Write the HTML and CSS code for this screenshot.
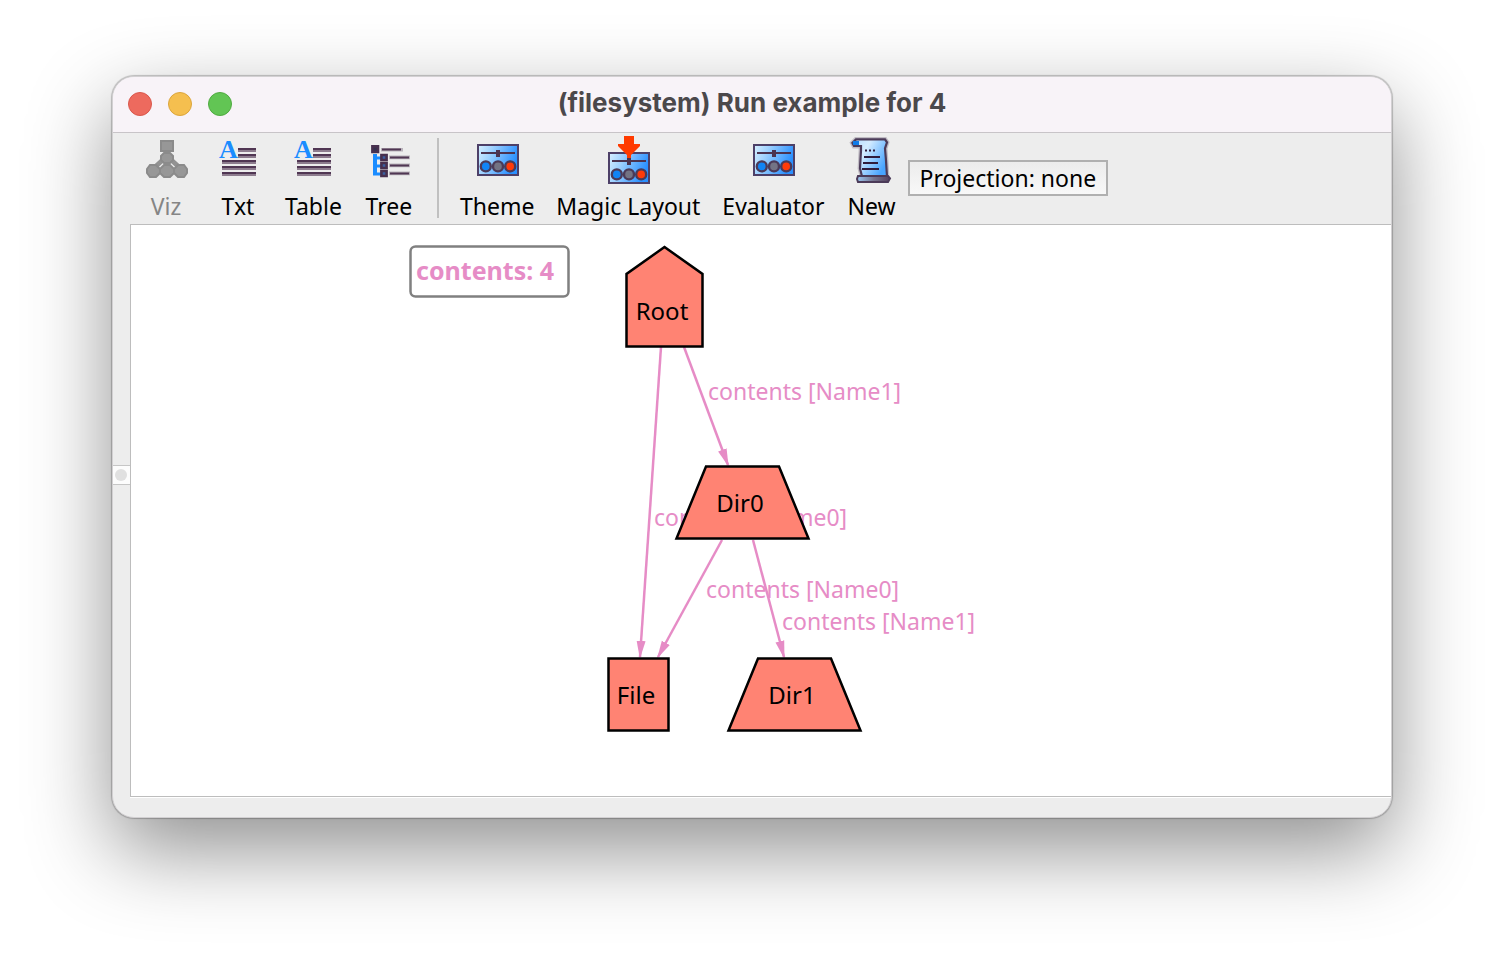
FILE: index.html
```html
<!DOCTYPE html>
<html lang="en">
<head>
<meta charset="utf-8">
<title>(filesystem) Run example for 4</title>
<link rel="stylesheet" href="styles.css">
</head>
<body>
<svg class="defs" width="0" height="0" aria-hidden="true">
  <defs>
    <linearGradient id="panelFill" x1="0" y1="0" x2="1" y2="0.3">
      <stop offset="0" stop-color="#d8f0ff"/>
      <stop offset="0.35" stop-color="#a0d2ff"/>
      <stop offset="1" stop-color="#2a90ff"/>
    </linearGradient>
    <linearGradient id="paperFill" x1="0" y1="0" x2="1" y2="0.6">
      <stop offset="0" stop-color="#b4dcff"/>
      <stop offset="0.4" stop-color="#d4ecff"/>
      <stop offset="1" stop-color="#48a4ff"/>
    </linearGradient>
    <linearGradient id="rollFill" x1="0" y1="0" x2="1" y2="0">
      <stop offset="0" stop-color="#9ac8f4"/>
      <stop offset="0.5" stop-color="#76748e"/>
      <stop offset="1" stop-color="#54405c"/>
    </linearGradient>
    <g id="panel">
      <rect x="2.5" y="4.5" width="20" height="15" fill="url(#panelFill)" stroke="#4d4068"/>
      <rect x="4" y="8" width="17" height="1" fill="#4b3350"/>
      <rect x="11.5" y="7" width="2" height="3.5" fill="#4b3350"/>
      <g stroke="#4b3a58" stroke-width="1.2">
        <circle cx="6.4" cy="15.2" r="2.5" fill="#1184f5"/>
        <circle cx="12.5" cy="15.2" r="2.5" fill="#737384"/>
        <circle cx="18.6" cy="15.2" r="2.5" fill="#ff3b0a"/>
      </g>
    </g>
    <g id="textLines">
      <path d="M12 6h9v2h-9zM12 9h9v2h-9zM4 12h17v2H4zM4 15h17v2H4zM4 18h17v2H4z" fill="#8d7c8e"/>
      <path d="M12 6h9v1h-9zM12 9h9v1h-9zM4 12h17v1H4zM4 15h17v1H4zM4 18h17v1H4z" fill="#503653"/>
      <text x="2.5" y="11" class="icon-letter">A</text>
    </g>
    <marker id="arrow" viewBox="0 0 20 10" refX="18" refY="5" markerWidth="18" markerHeight="10" markerUnits="userSpaceOnUse" orient="auto">
      <path d="M0 0L20 5L0 10z" fill="#e68cc6"/>
    </marker>
  </defs>
</svg>

<main class="window">
  <header class="titlebar">
    <div class="lights">
      <button class="light light-close" aria-label="Close"></button>
      <button class="light light-minimize" aria-label="Minimize"></button>
      <button class="light light-zoom" aria-label="Zoom"></button>
    </div>
    <h1 class="title">(filesystem) Run example for 4</h1>
  </header>

  <div class="body">
    <div class="gutter"><button class="grip" aria-label="Expand side panel"><span class="grip-dot"></span></button></div>
    <div class="content">
      <nav class="toolbar" aria-label="Views and tools">
        <button class="tool" disabled>
          <svg class="icon" viewBox="0 0 24 24" aria-hidden="true">
            <path d="M12.5 6v12M12.5 10L6 16M12.5 10L19 16" stroke="#929292" stroke-width="2.4" fill="none"/>
            <g fill="#979797" stroke="#8b8b8b">
              <path d="M9.5 2.5h6v5h-6z"/>
              <path d="M11 8.5h3l1.500 1.500v2l-1.500 1.500h-3l-1.500-1.500v-2z"/>
              <path d="M4 14.5h3l2 2v2l-2 2H4l-1.500-2v-2z"/>
              <path d="M11 14.5h3l2 2v2l-2 2h-3l-2-2v-2z"/>
              <path d="M18 14.5h3l1.500 2v2l-1.500 2h-3l-2-2v-2z"/>
            </g>
          </svg>
          <span>Viz</span>
        </button>
        <button class="tool">
          <svg class="icon" viewBox="0 0 24 24" aria-hidden="true"><use href="#textLines"/></svg>
          <span>Txt</span>
        </button>
        <button class="tool">
          <svg class="icon" viewBox="0 0 24 24" aria-hidden="true"><use href="#textLines"/></svg>
          <span>Table</span>
        </button>
        <button class="tool">
          <svg class="icon" viewBox="0 0 24 24" aria-hidden="true">
            <path d="M8 6h11v1.800H8zM12 9.800h10.500v1.800H12zM12 13.800h10.500v1.800H12zM12 17.800h10.500v1.800H12z" fill="#b9b3bb"/>
            <path d="M8.500 6.200h9.500v1H8.500zM12.500 10.200H22v1h-9.500zM12.500 14.200H22v1h-9.500zM12.500 18.200H22v1h-9.500z" fill="#503653"/>
            <path d="M4 9h2v1.200h2v1.500H6v2.500h2v1.500H6v2.500h2v1.500H4z" fill="#1a8cff"/>
            <g fill="#3b5fa0" stroke="#47304e" stroke-width="1.300">
              <path d="M3.700 5.200h2.800v2.800H3.700z" fill="#35304f"/>
              <path d="M8.200 9.500h2.600v2.500H8.200zM8.200 13.500h2.600v2.500H8.200zM8.200 17.500h2.600V20H8.200z"/>
            </g>
          </svg>
          <span>Tree</span>
        </button>
        <div class="separator" role="separator"></div>
        <button class="tool">
          <svg class="icon" viewBox="0 0 24 24" aria-hidden="true"><use href="#panel"/></svg>
          <span>Theme</span>
        </button>
        <button class="tool">
          <svg class="icon" viewBox="0 0 24 24" aria-hidden="true">
            <use href="#panel" y="4"/>
            <path d="M10 0h5v4h3v1l-4.500 4.500v1.500h-2V9.500L7 5V4h3z" fill="#ff3a00"/>
          </svg>
          <span>Magic Layout</span>
        </button>
        <button class="tool">
          <svg class="icon" viewBox="0 0 24 24" aria-hidden="true"><use href="#panel"/></svg>
          <span>Evaluator</span>
        </button>
        <button class="tool">
          <svg class="icon" viewBox="0 0 24 24" aria-hidden="true">
            <path d="M4 1.700h14.500l1 1.500-1 3 .5 6 .5 8H7l-1-4 .5-9V5H3L2.200 3.500z" fill="url(#paperFill)" stroke="#c0bcc4" stroke-width="2.400"/>
            <path d="M4 1.700h14.500l1 1.500-1 3 .5 6 .5 8H7l-1-4 .5-9V5H3L2.200 3.500z" fill="url(#paperFill)" stroke="#4b3a58" stroke-width="1.100"/>
            <path d="M2.500 2.500h3v2h-3z" fill="#0f7be8"/>
            <path d="M5 20h15l1 1.200-1 1.800H5l-.5-1.500z" fill="url(#rollFill)" stroke="#4b3a58" stroke-width="1"/>
            <path d="M8.500 6.800h1v1h-1zM10.500 6.800h1v1h-1zM12.500 6.800h1v1h-1zM8 10h8v1H8zM7.500 13h7.500v1H7.500zM7 16h8.500v1H7z" fill="#2f1c3c"/>
          </svg>
          <span>New</span>
        </button>
        <button class="projection">Projection: none</button>
      </nav>

      <section class="canvas" aria-label="Instance graph">
        <svg class="graph" viewBox="131 225 880 540" width="880" height="540">
          <rect x="410.5" y="246.5" width="158" height="50" rx="5" class="legend-box"/>
          <text x="416" y="280" class="legend-text">contents: 4</text>

          <g class="edges">
            <path d="M661 347L640 657" marker-end="url(#arrow)"/>
            <path d="M684 347L728 465" marker-end="url(#arrow)"/>
            <path d="M722 540L658 657" marker-end="url(#arrow)"/>
            <path d="M753 540L784 657" marker-end="url(#arrow)"/>
          </g>
          <g class="edge-labels">
            <text x="708" y="400">contents [Name1]</text>
            <text x="654" y="526">contents [Name0]</text>
            <text x="706" y="598">contents [Name0]</text>
            <text x="782" y="630">contents [Name1]</text>
          </g>
          <g class="nodes">
            <path d="M664.5 247L702.5 274V346.5H626.5V274z"/>
            <path d="M706 466.5H779L808.5 538.5H676.5z"/>
            <path d="M608.5 658.5H668.5V730.5H608.5z"/>
            <path d="M758 658.5H831L860.5 730.5H728.5z"/>
          </g>
          <g class="node-labels">
            <text x="662" y="320">Root</text>
            <text x="740" y="512">Dir0</text>
            <text x="636" y="704">File</text>
            <text x="792" y="704">Dir1</text>
          </g>
        </svg>
      </section>
    </div>
  </div>
</main>
</body>
</html>
```
FILE: styles.css
```css
* { box-sizing: border-box; }

body {
  margin: 0;
  min-height: 100vh;
  padding: 76px 112px 148px;
  display: flex;
  background: #fff;
  color: #000;
  font-family: "Noto Sans", sans-serif;
  overflow: hidden;
}

button {
  margin: 0;
  padding: 0;
  border: 0;
  background: none;
  color: inherit;
  font: inherit;
}

.defs { position: absolute; }

.window {
  flex: 1;
  display: flex;
  flex-direction: column;
  min-width: 0;
  overflow: hidden;
  border: 1px solid #d2d0d2;
  border-radius: 22px;
  background: #ededed;
  box-shadow: 0 0 1px 1px rgba(0, 0, 0, 0.22), 0 32px 84px rgba(0, 0, 0, 0.44);
}

.titlebar {
  display: grid;
  grid-template-columns: 1fr auto 1fr;
  align-items: center;
  height: 56px;
  padding: 0 15px 2px;
  border-bottom: 1px solid #c8c4c8;
  background: #f8f3f8;
}

.lights { display: flex; gap: 16px; }

.light {
  width: 24px;
  height: 24px;
  border: 1px solid;
  border-radius: 50%;
}

.light-close { background: #ed6a5e; border-color: #d9574c; }
.light-minimize { background: #f5bf4f; border-color: #dba53c; }
.light-zoom { background: #62c554; border-color: #50aa41; }

.title {
  margin: 0;
  padding-bottom: 2px;
  color: #4b484b;
  font: bold 26px/32px Inter, sans-serif;
}

.body { flex: 1; display: flex; min-height: 0; }

.gutter {
  display: flex;
  align-items: center;
  flex: 0 0 17px;
}

.grip {
  display: flex;
  align-items: center;
  width: 100%;
  height: 20px;
  padding-left: 2px;
  border: solid #c6c6c6;
  border-width: 1px 0;
  background: #fcfcfc;
}

.grip-dot {
  width: 12px;
  height: 12px;
  border-radius: 50%;
  background: #e0e0e0;
}

.content {
  flex: 1;
  display: flex;
  flex-direction: column;
  min-width: 0;
  padding-bottom: 20px;
}

.toolbar {
  display: flex;
  height: 91px;
  font-size: 23px;
  line-height: 32px;
}

.tool {
  display: flex;
  flex-direction: column;
  align-items: center;
  gap: 6px;
  min-width: 72px;
  padding: 3px 11px 0;
  white-space: nowrap;
}

.tool:disabled { color: #858585; }

.icon { display: block; flex: none; width: 48px; height: 48px; }

.icon-letter {
  fill: #1a8cff;
  font: bold 13px "Liberation Serif", serif;
}

.separator {
  width: 2px;
  height: 80px;
  margin: 5px 10px 0 12px;
  background: #c0c0c0;
}

.projection {
  align-self: flex-start;
  height: 36px;
  margin-top: 27px;
  padding: 0 10px;
  border: 2px solid #b0b0b0;
  background: linear-gradient(#ececec, #f8f8f8);
  line-height: 30px;
  white-space: nowrap;
}

.canvas {
  flex: 1;
  min-height: 0;
  border: solid #bdbdbd;
  border-width: 1px 0 1px 1px;
  background: #fff;
  box-shadow: 0 1px 0 #fff;
}

.graph { display: block; }

.legend-box { fill: #fff; stroke: #808080; stroke-width: 2.5px; }

.legend-text { fill: #e68cc6; font-size: 25px; font-weight: bold; }

.edges { fill: none; stroke: #e68cc6; stroke-width: 2.5px; }

.edge-labels { fill: #e68cc6; font-size: 23px; }

.nodes { fill: #ff8373; stroke: #000; stroke-width: 2.5px; }

.node-labels { font-size: 24px; text-anchor: middle; }
```
